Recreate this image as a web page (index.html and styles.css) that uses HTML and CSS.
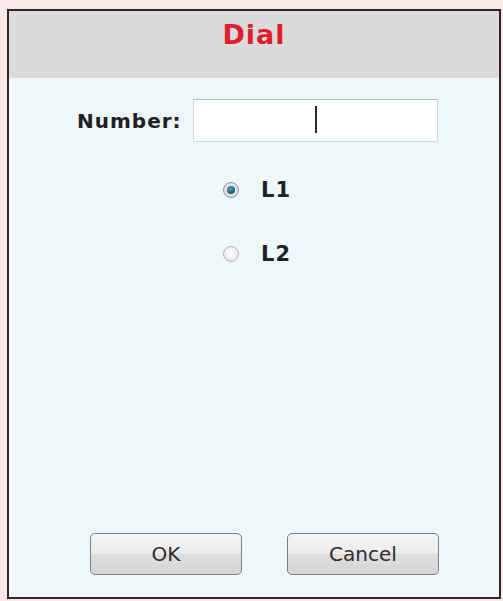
FILE: index.html
```html
<!DOCTYPE html>
<html lang="en">
<head>
<meta charset="utf-8">
<title>Dial</title>
<link rel="stylesheet" href="styles.css">
</head>
<body>
<div class="dialog">
  <div class="dialog-header">
    <h1 class="dialog-title">Dial</h1>
  </div>
  <div class="dialog-body">
    <div class="number-row">
      <label class="number-label" for="num">Number:</label>
      <div class="number-input"><span class="caret"></span></div>
    </div>
    <div class="lines">
      <div class="line-option">
        <span class="radio radio-on"><span class="radio-dot"></span></span>
        <span class="line-name">L1</span>
      </div>
      <div class="line-option">
        <span class="radio"></span>
        <span class="line-name">L2</span>
      </div>
    </div>
    <div class="actions">
      <button class="btn" type="button">OK</button>
      <button class="btn" type="button">Cancel</button>
    </div>
  </div>
</div>
</body>
</html>
```
FILE: styles.css
```css
html, body {
  margin: 0;
  padding: 0;
}
body {
  background: #f9e7ea;
  padding: 9px 2px 2px 7px;
  font-family: "DejaVu Sans", Verdana, sans-serif;
}
.dialog {
  box-sizing: border-box;
  width: 494px;
  height: 590px;
  border: 2px solid #2e2628;
  background: #eef7fa;
  display: flex;
  flex-direction: column;
}
.dialog-header {
  height: 67px;
  background: #dbdbdb;
  display: flex;
  justify-content: center;
  align-items: flex-start;
}
.dialog-title {
  margin: 8px 0 0 0;
  font-size: 27px;
  font-weight: bold;
  color: #e21c2c;
  letter-spacing: 1px;
  line-height: 32px;
}
.dialog-body {
  flex: 1;
  display: flex;
  flex-direction: column;
}
.number-row {
  display: flex;
  align-items: center;
  margin: 21px 0 0 68px;
}
.number-label {
  font-size: 20px;
  font-weight: bold;
  color: #1d2024;
  letter-spacing: 1px;
  width: 116px;
}
.number-input {
  box-sizing: border-box;
  width: 245px;
  height: 43px;
  background: #ffffff;
  border: 1px solid #d6d9dc;
  border-top-color: #b9bcc0;
  position: relative;
}
.caret {
  position: absolute;
  left: 121px;
  top: 6px;
  width: 2px;
  height: 27px;
  background: #2a2a2a;
}
.lines {
  display: flex;
  flex-direction: column;
  gap: 42px;
  margin: 37px 0 0 214px;
}
.line-option {
  display: flex;
  align-items: center;
  height: 22px;
}
.radio {
  box-sizing: border-box;
  width: 16px;
  height: 16px;
  border-radius: 50%;
  border: 1px solid #b1b5b9;
  background: radial-gradient(circle at 50% 40%, #ffffff 0%, #eceef0 55%, #d4d7da 100%);
  display: flex;
  align-items: center;
  justify-content: center;
  margin-right: 22px;
}
.radio-on {
  border-color: #8e969c;
  background: radial-gradient(circle at 50% 45%, #f4f6f8 0%, #dfe3e6 60%, #c5cacf 100%);
}
.radio-dot {
  width: 8px;
  height: 8px;
  border-radius: 50%;
  background: radial-gradient(circle at 40% 35%, #5fa3b5 0%, #1d6577 60%, #0f4a59 100%);
}
.line-name {
  font-size: 21px;
  font-weight: bold;
  color: #1d2024;
  letter-spacing: 1px;
}
.actions {
  margin-top: auto;
  margin-bottom: 22px;
  display: flex;
  gap: 45px;
  padding-left: 81px;
}
.btn {
  box-sizing: border-box;
  width: 152px;
  height: 42px;
  border: 1px solid #7b7f84;
  border-radius: 5px;
  background: linear-gradient(#f5f5f5 0%, #ebebeb 50%, #dedede 51%, #d5d5d5 100%);
  font-family: "DejaVu Sans", Verdana, sans-serif;
  font-size: 20px;
  color: #2c2c2c;
  padding: 0;
  cursor: pointer;
}
```
